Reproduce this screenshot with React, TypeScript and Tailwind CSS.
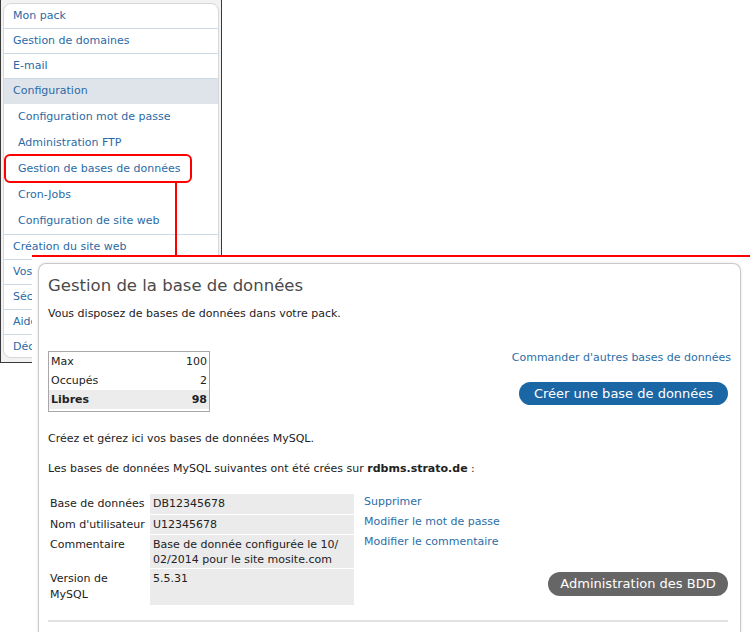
import React from "react"

const topItems = ["Mon pack", "Gestion de domaines", "E-mail"]
const subItems = [
  "Configuration mot de passe",
  "Administration FTP",
  "Gestion de bases de données",
  "Cron-Jobs",
  "Configuration de site web",
]
const bottomItems = ["Création du site web", "Vos statistiques", "Sécurité", "Aide", "Déconnexion"]

const infoRows = [
  { label: "Base de données", value: "DB12345678", h: "h-[20px]" },
  { label: "Nom d'utilisateur", value: "U12345678", h: "h-[19px]" },
  { label: "Commentaire", value: "Base de donnée configurée le 10/ 02/2014 pour le site mosite.com", h: "h-[33px]" },
  { label: "Version de\nMySQL", value: "5.5.31", h: "h-[36px]" },
]

const font = { fontFamily: '"DejaVu Sans", Verdana, sans-serif' }

function SideMenu() {
  return (
    <div className="w-[222px] h-[363px] border-l border-r border-b border-[#3a3a3a] bg-[#f2f2f2] pl-[2px] pr-[2px] pt-[3px] pb-[4px]">
      <div className="h-full bg-white rounded-lg border border-[#d8d8d8] overflow-hidden text-[11px] text-[#2a6aa6]">
        {topItems.map((t) => (
          <div key={t} className="h-[25px] flex items-center pl-[9px] border-b border-[#cddbe6]">
            {t}
          </div>
        ))}
        <div className="h-[25px] flex items-center pl-[9px] bg-[#dfe4ea]">Configuration</div>
        {subItems.map((t) => (
          <div key={t} className="h-[26px] flex items-center pl-[14px]">
            {t}
          </div>
        ))}
        {/* the last entries sit mostly under the panel */}
        {bottomItems.map((t) => (
          <div key={t} className="h-[25px] flex items-center pl-[9px] border-t border-[#cddbe6] whitespace-nowrap">
            {t}
          </div>
        ))}
      </div>
    </div>
  )
}

function DatabasePanel() {
  return (
    <div className="h-full bg-white pl-[6px] pr-[9px] pt-[6px]">
      <div className="h-full rounded-t-lg border border-b-0 border-[#c9c9c9] shadow-[0_0_3px_rgba(0,0,0,0.12)] px-[9px] pt-[11px] text-[11px] text-[#222]">
        <h2 className="text-[16.5px] leading-[22px] text-[#4a4a4a]">Gestion de la base de données</h2>
        <p className="mt-[10px] leading-[14px]">Vous disposez de bases de données dans votre pack.</p>

        <div className="flex justify-between mt-[30px]">
          <div className="w-[162px] border border-[#a8a8a8] h-[61px] leading-[19px]">
            <div className="flex justify-between px-[2px]">
              <span>Max</span>
              <span>100</span>
            </div>
            <div className="flex justify-between px-[2px]">
              <span>Occupés</span>
              <span>2</span>
            </div>
            <div className="flex justify-between px-[2px] bg-[#ececec] font-bold">
              <span>Libres</span>
              <span>98</span>
            </div>
          </div>
          <div className="flex flex-col items-end">
            <a className="text-[#2a6ea8] leading-[14px]">Commander d'autres bases de données</a>
            <button className="mt-[17px] mr-[3px] w-[209px] h-[23px] rounded-full bg-[#1b66a4] text-white text-[13px]">
              Créer une base de données
            </button>
          </div>
        </div>

        <p className="mt-[20px] leading-[14px]">Créez et gérez ici vos bases de données MySQL.</p>
        <p className="mt-[16px] leading-[14px]">
          Les bases de données MySQL suivantes ont été crées sur <b>rdbms.strato.de</b> :
        </p>

        <div className="flex mt-[18px] pb-[15px] border-b-2 border-[#e2e2e2] mr-[3px]">
          <div className="w-[306px] flex flex-col gap-[1px]">
            {infoRows.map((r) => (
              <div key={r.label} className={`flex ${r.h}`}>
                <div className="w-[102px] pl-[2px] pt-[2px] leading-[16px] whitespace-pre-line">{r.label}</div>
                <div className="w-[204px] bg-[#ebebeb] pl-[3px] pt-[2px] leading-[15px]">{r.value}</div>
              </div>
            ))}
          </div>
          <div className="flex-1 flex flex-col pl-[10px] -mt-[2px] text-[#2a6ea8] leading-[20px]">
            <a>Supprimer</a>
            <a>Modifier le mot de passe</a>
            <a>Modifier le commentaire</a>
            <div className="mt-auto mb-[9px] flex justify-end">
              <button className="w-[180px] h-[24px] rounded-full bg-[#666] text-white text-[13px]">
                Administration des BDD
              </button>
            </div>
          </div>
        </div>
      </div>
    </div>
  )
}

export default function App() {
  return (
    <div className="relative w-[750px] h-[632px] overflow-hidden bg-white" style={font}>
      <SideMenu />

      {/* callout from the menu entry to the panel */}
      <div className="absolute left-[4px] top-[154px] w-[188px] h-[29px] border-2 border-[#f00] rounded-md" />
      <div className="absolute left-[175px] top-[182px] w-[2px] h-[75px] bg-[#f00]" />
      <div className="absolute left-[32px] top-[255px] right-0 h-[2px] bg-[#f00]" />

      <div className="absolute left-[32px] top-[257px] right-0 bottom-0">
        <DatabasePanel />
      </div>
    </div>
  )
}
